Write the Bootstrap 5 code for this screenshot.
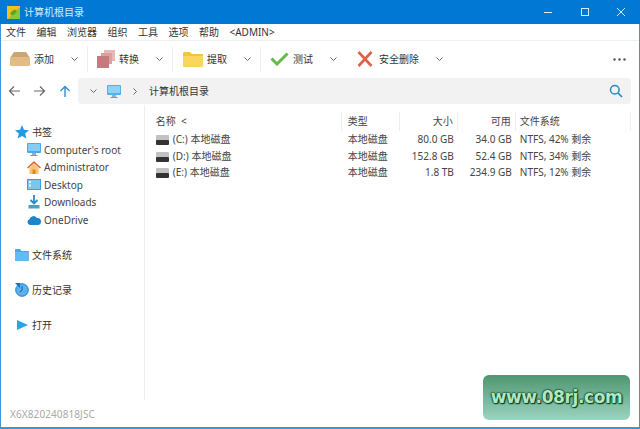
<!DOCTYPE html>
<html lang="zh">
<head>
<meta charset="UTF-8">
<title>计算机根目录</title>
<link href="https://cdn.jsdelivr.net/npm/bootstrap@5.3.3/dist/css/bootstrap.min.css" rel="stylesheet">
<script src="https://cdn.jsdelivr.net/npm/bootstrap@5.3.3/dist/js/bootstrap.bundle.min.js"></script>
<style>
html, body { width: 640px; height: 429px; overflow: hidden; background: #fff; }
body { font-family: "Noto Sans", "Noto Sans CJK SC", sans-serif; font-size: 10px; color: #333; line-height: 1; }
.win { position: relative; width: 640px; height: 429px; border: 1px solid #3d94d8; border-top: 0; border-bottom-width: 2px; }
.titlebar { height: 24px; margin: 0 -1px; background: #0078d4; color: #dcecf8; padding-left: 7px; }
.titlebar .ttl { margin-left: 4px; font-size: 10px; }
.winbtns { margin-left: auto; }
.winbtns svg { display: block; margin: 0 14px 0 12.500px; }
.menubar { height: 16px; padding-left: 5px; gap: 10.500px; color: #333; }
.toolbar { height: 37px; border-top: 1px solid #f0f0f0; padding-left: 9px; }
.tool { height: 36px; }
.tool .lbl { margin-left: 4px; }
.chev { display: block; }
.tsep { width: 1px; height: 26px; background: #eee; }
.addrrow { height: 28px; padding-left: 7px; }
.addrbox { width: 553px; height: 26px; margin-left: 7px; background: #f2f2f2; border-radius: 4px; padding: 0 8px 0 11px; }
.mainarea { height: 295px; }
.sidenav { width: 144px; height: 295px; border-right: 1px solid #eee; padding: 18px 0 0 14px; }
.side-head { height: 18px; gap: 3px; }
.side-item { height: 17.500px; padding-left: 12px; gap: 3px; color: #444; }
.side-item svg, .side-head svg { flex: none; }
.side-gap { margin-top: 17px; }
.filelist { width: 495px; padding-top: 7px; color: #444; }
.col-name { width: 197px; padding-left: 11px; }
.col-type { width: 58px; padding-left: 6px; }
.col-size { width: 58px; padding-right: 4px; text-align: right; }
.col-free { width: 58px; padding-right: 4px; text-align: right; }
.col-fs { width: 115px; padding-left: 4px; }
.head-row { height: 19px; }
.head-row > div { height: 19px; line-height: 18px; border-right: 1px solid #eee; }
.file-row { height: 16.600px; line-height: 16.600px; }
.disk { margin-right: 4px; vertical-align: -2px; }
.serial { height: 27px; padding-left: 9px; color: #a9a9a9; letter-spacing: .1px; }
.wmark { position: absolute; left: 482px; top: 375px; width: 147px; height: 45px; border-radius: 6px; background: linear-gradient(#4f9670, #9ad4c2); color: #b4e6c0; font-family: "DejaVu Sans", sans-serif; font-size: 17px; font-weight: 700; letter-spacing: -.4px; text-shadow: 0 0 1px #063f20, 0 0 2px #063f20, 0 0 2px #063f20, 1px 1px 1px #063f20; }
</style>
</head>
<body>
<div class="win">
  <div class="titlebar d-flex align-items-center">
    <svg width="13" height="13" viewBox="0 0 13 13"><rect width="13" height="13" fill="#f0c020"/><path d="M1 13 L13 1 V13Z" fill="#8cc63a"/><ellipse cx="6.500" cy="6.500" rx="3.500" ry="2" transform="rotate(-40 6.500 6.500)" fill="#5aa820"/></svg>
    <span class="ttl">计算机根目录</span>
    <div class="winbtns d-flex align-items-center">
      <svg width="10" height="10" viewBox="0 0 10 10"><path d="M1 5.500H9" stroke="#d8ebf8" stroke-width="1"/></svg>
      <svg width="10" height="10" viewBox="0 0 10 10"><rect x="1.500" y="1.500" width="7" height="7" fill="none" stroke="#d8ebf8"/></svg>
      <svg width="10" height="10" viewBox="0 0 10 10"><path d="M1 1L9 9M9 1L1 9" stroke="#d8ebf8"/></svg>
    </div>
  </div>

  <div class="menubar d-flex align-items-center">
    <span>文件</span><span>编辑</span><span>浏览器</span><span>组织</span><span>工具</span><span>选项</span><span>帮助</span><span>&lt;ADMIN&gt;</span>
  </div>

  <div class="toolbar d-flex align-items-center">
    <div class="tool d-flex align-items-center">
      <svg width="20" height="14" viewBox="0 0 20 14"><path d="M0 6L4 0H16L20 6Z" fill="#c9a474"/><rect y="5" width="20" height="9" rx="1" fill="#e2bc84"/></svg>
      <span class="lbl">添加</span>
      <svg class="chev ms-3" width="9" height="6" viewBox="0 0 9 6"><path d="M1.500 1.500L4.500 4.500L7.500 1.500" fill="none" stroke="#666"/></svg>
    </div>
    <div class="tsep ms-2"></div>
    <div class="tool d-flex align-items-center" style="margin-left:9px">
      <svg width="18" height="18" viewBox="0 0 18 18"><rect x="7" y="0" width="11" height="11" fill="#e8b8b8"/><rect x="4" y="3" width="11" height="11" fill="#dca0a0"/><rect x="0" y="6" width="12" height="12" fill="#c77a7e"/></svg>
      <span class="lbl">转换</span>
      <svg class="chev ms-3" width="9" height="6" viewBox="0 0 9 6"><path d="M1.500 1.500L4.500 4.500L7.500 1.500" fill="none" stroke="#666"/></svg>
    </div>
    <div class="tsep" style="margin-left:8px"></div>
    <div class="tool d-flex align-items-center" style="margin-left:10px">
      <svg width="20" height="15" viewBox="0 0 20 15"><path d="M0 1.500C0 .7.700 0 1.500 0H7L9 2H20V15H0Z" fill="#f2c63c"/><path d="M0 4H20V15H0Z" fill="#fbd65c"/></svg>
      <span class="lbl">提取</span>
      <svg class="chev ms-3" width="9" height="6" viewBox="0 0 9 6"><path d="M1.500 1.500L4.500 4.500L7.500 1.500" fill="none" stroke="#666"/></svg>
    </div>
    <div class="tsep" style="margin-left:8px"></div>
    <div class="tool d-flex align-items-center" style="margin-left:9px">
      <svg width="19" height="14" viewBox="0 0 19 14"><path d="M1.500 6.500L7 12L17.500 1.500" fill="none" stroke="#62bb46" stroke-width="3"/></svg>
      <span class="lbl">测试</span>
      <svg class="chev ms-3" width="9" height="6" viewBox="0 0 9 6"><path d="M1.500 1.500L4.500 4.500L7.500 1.500" fill="none" stroke="#666"/></svg>
    </div>
    <div class="tool d-flex align-items-center" style="margin-left:19px">
      <svg width="16" height="16" viewBox="0 0 16 16"><path d="M1.500 1L14.500 15M14.500 1L1.500 15" stroke="#dc6248" stroke-width="2.600"/></svg>
      <span class="lbl" style="margin-left:6px">安全删除</span>
      <svg class="chev" style="margin-left:16px" width="9" height="6" viewBox="0 0 9 6"><path d="M1.500 1.500L4.500 4.500L7.500 1.500" fill="none" stroke="#666"/></svg>
    </div>
    <svg class="ms-auto" style="margin-right:13px" width="13" height="3" viewBox="0 0 13 3"><circle cx="1.500" cy="1.500" r="1.200" fill="#555"/><circle cx="6.500" cy="1.500" r="1.200" fill="#555"/><circle cx="11.500" cy="1.500" r="1.200" fill="#555"/></svg>
  </div>

  <div class="addrrow d-flex align-items-center">
    <svg width="13" height="12" viewBox="0 0 13 12"><path d="M12 6H1.500M6 1.500L1.500 6L6 10.500" fill="none" stroke="#666" stroke-width="1.200"/></svg>
    <svg style="margin-left:12px" width="13" height="12" viewBox="0 0 13 12"><path d="M1 6H11.500M7 1.500L11.500 6L7 10.500" fill="none" stroke="#666" stroke-width="1.200"/></svg>
    <svg style="margin-left:13px" width="12" height="13" viewBox="0 0 12 13"><path d="M6 12V1.500M1.500 6L6 1.500L10.500 6" fill="none" stroke="#2a8fd8" stroke-width="1.400"/></svg>
    <div class="addrbox d-flex align-items-center">
      <svg width="9" height="6" viewBox="0 0 9 6"><path d="M1.500 1.500L4.500 4.500L7.500 1.500" fill="none" stroke="#666"/></svg>
      <svg style="margin-left:9px" width="14" height="13" viewBox="0 0 14 13"><rect width="14" height="10" rx="1" fill="#52b0ec"/><rect x="1" y="1" width="12" height="7" fill="#8fd2f8"/><rect x="5" y="10" width="4" height="2" fill="#9ab0c0"/><rect x="3.500" y="12" width="7" height="1" fill="#7d97a8"/></svg>
      <svg style="margin-left:11px" width="6" height="9" viewBox="0 0 6 9"><path d="M1.500 1.500L4.500 4.500L1.500 7.500" fill="none" stroke="#666"/></svg>
      <span style="margin-left:11px">计算机根目录</span>
      <svg class="ms-auto" width="14" height="14" viewBox="0 0 14 14"><circle cx="5.800" cy="5.800" r="4.300" fill="none" stroke="#2a86c8" stroke-width="1.500"/><path d="M9 9L13 13" stroke="#2a86c8" stroke-width="1.700"/></svg>
    </div>
  </div>

  <div class="mainarea d-flex">
    <div class="sidenav">
      <div class="side-head d-flex align-items-center">
        <svg width="14" height="14" viewBox="0 0 14 14"><path d="M7 0L9 4.800L14 5.300L10.200 8.600L11.400 13.600L7 11L2.600 13.600L3.800 8.600L0 5.300L5 4.800Z" fill="#1f9be8"/></svg>
        <span>书签</span>
      </div>
      <div class="side-item d-flex align-items-center">
        <svg width="14" height="13" viewBox="0 0 14 13"><rect width="14" height="10" rx="1" fill="#4aa8e8"/><rect x="1" y="1" width="12" height="7" fill="#86cdf6"/><rect x="5" y="10" width="4" height="2" fill="#9ab0c0"/><rect x="3.500" y="12" width="7" height="1" fill="#7d97a8"/></svg>
        <span>Computer's root</span>
      </div>
      <div class="side-item d-flex align-items-center">
        <svg width="14" height="13" viewBox="0 0 14 13"><path d="M7 0L14 6.500L12.800 7.500L7 2.200L1.200 7.500L0 6.500Z" fill="#e0683c"/><path d="M2.500 7L7 3L11.500 7V13H2.500Z" fill="#f6c66a"/><rect x="5.500" y="8.500" width="3" height="4.500" fill="#d28a3c"/></svg>
        <span>Administrator</span>
      </div>
      <div class="side-item d-flex align-items-center">
        <svg width="14" height="11" viewBox="0 0 14 11"><rect width="14" height="11" fill="#3f9fd8"/><rect x="1" y="1" width="12" height="9" fill="#7cc6ea"/><rect x="2" y="2" width="2" height="2" fill="#e6f6fc"/><rect x="2" y="5.500" width="2" height="2" fill="#e6f6fc"/></svg>
        <span>Desktop</span>
      </div>
      <div class="side-item d-flex align-items-center">
        <svg width="14" height="14" viewBox="0 0 14 14"><path d="M7 0V8M3.500 5L7 8.500L10.500 5" fill="none" stroke="#1f8fcf" stroke-width="1.800"/><rect x="1.500" y="10" width="11" height="3.500" fill="#4aa0c0"/></svg>
        <span>Downloads</span>
      </div>
      <div class="side-item d-flex align-items-center">
        <svg width="14" height="10" viewBox="0 0 14 10"><path d="M3 10A3 3 0 0 1 2.500 4.200A4 4 0 0 1 9.800 3A3.500 3.500 0 0 1 14 6.800A3.200 3.200 0 0 1 11.500 10Z" fill="#1c84c8"/></svg>
        <span>OneDrive</span>
      </div>
      <div class="side-head d-flex align-items-center" style="margin-top:17px">
        <svg width="14" height="12" viewBox="0 0 14 12"><path d="M0 1C0 .4.400 0 1 0H5L6.500 2H14V12H0Z" fill="#4ba8e6"/><path d="M0 3H14V12H0Z" fill="#62bcf2"/></svg>
        <span>文件系统</span>
      </div>
      <div class="side-head d-flex align-items-center side-gap">
        <svg width="14" height="14" viewBox="0 0 14 14"><circle cx="7" cy="7" r="6.300" fill="#5cb2ec" stroke="#1f7fc4"/><path d="M7 3V7.500L4.500 9" fill="none" stroke="#15659e"/><path d="M0 0H5V5Z" fill="#1f6fa8"/></svg>
        <span>历史记录</span>
      </div>
      <div class="side-head d-flex align-items-center side-gap">
        <svg width="14" height="14" viewBox="0 0 14 14"><path d="M2 2L13 7L2 12Z" fill="#28a4e8"/></svg>
        <span>打开</span>
      </div>
    </div>

    <div class="filelist">
      <div class="head-row d-flex">
        <div class="col-name">名称 &nbsp;&lt;</div>
        <div class="col-type">类型</div>
        <div class="col-size">大小</div>
        <div class="col-free">可用</div>
        <div class="col-fs">文件系统</div>
      </div>
      <div class="file-row d-flex">
        <div class="col-name"><svg class="disk" width="13" height="10" viewBox="0 0 13 10"><rect width="13" height="6" rx="1" fill="#c2c2c2"/><rect y="5" width="13" height="5" rx="1" fill="#333"/></svg>(C:) 本地磁盘</div>
        <div class="col-type">本地磁盘</div>
        <div class="col-size">80.0 GB</div>
        <div class="col-free">34.0 GB</div>
        <div class="col-fs">NTFS, 42% 剩余</div>
      </div>
      <div class="file-row d-flex">
        <div class="col-name"><svg class="disk" width="13" height="10" viewBox="0 0 13 10"><rect width="13" height="6" rx="1" fill="#c2c2c2"/><rect y="5" width="13" height="5" rx="1" fill="#333"/></svg>(D:) 本地磁盘</div>
        <div class="col-type">本地磁盘</div>
        <div class="col-size">152.8 GB</div>
        <div class="col-free">52.4 GB</div>
        <div class="col-fs">NTFS, 34% 剩余</div>
      </div>
      <div class="file-row d-flex">
        <div class="col-name"><svg class="disk" width="13" height="10" viewBox="0 0 13 10"><rect width="13" height="6" rx="1" fill="#c2c2c2"/><rect y="5" width="13" height="5" rx="1" fill="#333"/></svg>(E:) 本地磁盘</div>
        <div class="col-type">本地磁盘</div>
        <div class="col-size">1.8 TB</div>
        <div class="col-free">234.9 GB</div>
        <div class="col-fs">NTFS, 12% 剩余</div>
      </div>
    </div>
  </div>

  <div class="serial d-flex align-items-center">X6X820240818JSC</div>
  <div class="wmark d-flex align-items-center justify-content-center">www.08rj.com</div>
</div>
</body>
</html>
